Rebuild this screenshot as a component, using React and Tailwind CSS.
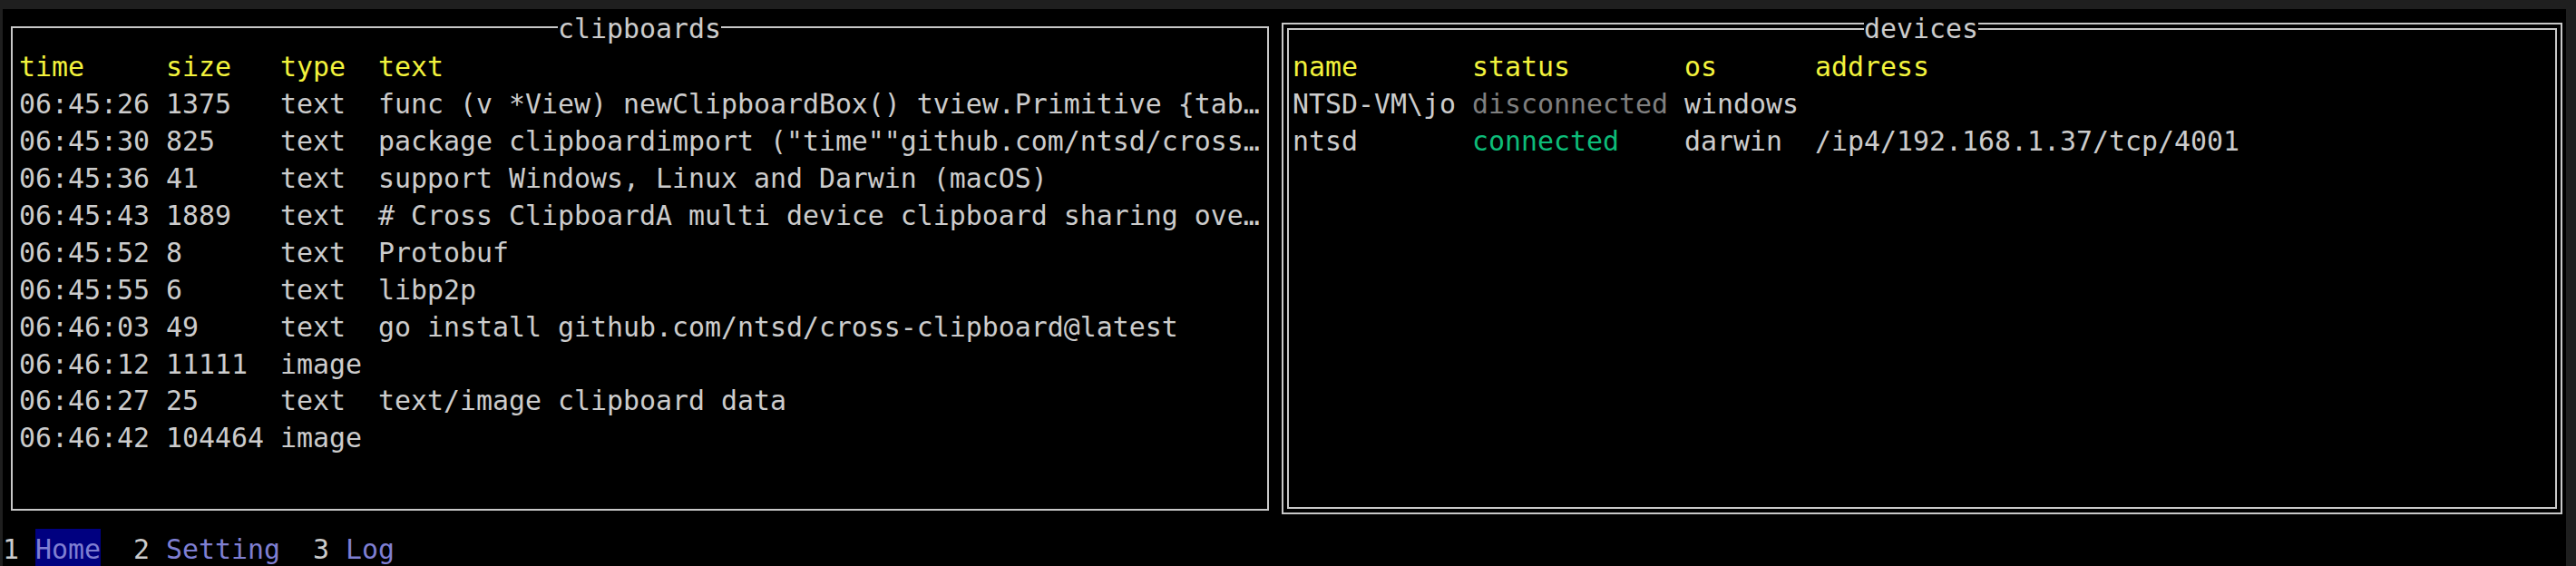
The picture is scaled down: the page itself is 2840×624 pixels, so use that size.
import React from 'react';

const clipboards = [
  ['06:45:26', '1375', 'text', 'func (v *View) newClipboardBox() tview.Primitive {tab…'],
  ['06:45:30', '825', 'text', 'package clipboardimport ("time""github.com/ntsd/cross…'],
  ['06:45:36', '41', 'text', 'support Windows, Linux and Darwin (macOS)'],
  ['06:45:43', '1889', 'text', '# Cross ClipboardA multi device clipboard sharing ove…'],
  ['06:45:52', '8', 'text', 'Protobuf'],
  ['06:45:55', '6', 'text', 'libp2p'],
  ['06:46:03', '49', 'text', 'go install github.com/ntsd/cross-clipboard@latest'],
  ['06:46:12', '11111', 'image', ''],
  ['06:46:27', '25', 'text', 'text/image clipboard data'],
  ['06:46:42', '104464', 'image', ''],
];

const devices = [
  { name: 'NTSD-VM\\jo', status: 'disconnected', os: 'windows', address: '' },
  { name: 'ntsd', status: 'connected', os: 'darwin', address: '/ip4/192.168.1.37/tcp/4001' },
];

const ClipboardBox = () => (
  <div className="w-[1404px] h-full pt-[19px] pb-[20px] pl-[9px] pr-[8px]">
    <div className="relative h-full border-2 border-[#c8c8c8] pt-[23px] pl-[7px]">
      <span className="absolute left-[601px] top-[-19px] bg-black whitespace-pre">clipboards</span>
      <div className="flex text-[#f2f23c]">
        <span className="w-[162px] shrink-0">time</span>
        <span className="w-[126px] shrink-0">size</span>
        <span className="w-[108px] shrink-0">type</span>
        <span>text</span>
      </div>
      {clipboards.map((row) => (
        <div key={row[0]} className="flex whitespace-pre">
          <span className="w-[162px] shrink-0">{row[0]}</span>
          <span className="w-[126px] shrink-0">{row[1]}</span>
          <span className="w-[108px] shrink-0">{row[2]}</span>
          <span>{row[3]}</span>
        </div>
      ))}
    </div>
  </div>
);

const DevicesBox = () => (
  <div className="flex-1 h-full pt-[15px] pb-[16px] pl-[6px] pr-[4px]">
    <div className="relative h-full border-2 border-[#c8c8c8] p-[4px]">
      <span className="absolute left-[640px] top-[-15px] bg-black whitespace-pre">devices</span>
      <div className="h-full border-2 border-[#c8c8c8] pt-[21px] pl-[4px]">
        <div className="flex text-[#f2f23c]">
          <span className="w-[198px] shrink-0">name</span>
          <span className="w-[234px] shrink-0">status</span>
          <span className="w-[144px] shrink-0">os</span>
          <span>address</span>
        </div>
        {devices.map((d) => (
          <div key={d.name} className="flex whitespace-pre">
            <span className="w-[198px] shrink-0">{d.name}</span>
            <span
              className={
                d.status === 'connected'
                  ? 'w-[234px] shrink-0 text-[#0dbc79]'
                  : 'w-[234px] shrink-0 text-[#7f7f7f]'
              }
            >
              {d.status}
            </span>
            <span className="w-[144px] shrink-0">{d.os}</span>
            <span>{d.address}</span>
          </div>
        ))}
      </div>
    </div>
  </div>
);

const TabBar = () => (
  <div className="flex-1 flex items-stretch whitespace-pre">
    <span className="pt-[3px]">1 </span>
    <span className="pt-[3px] bg-[#000080] text-[#7f7fd2]">Home</span>
    <span className="pt-[3px]">  2 </span>
    <span className="pt-[3px] text-[#7f7fd2]">Setting</span>
    <span className="pt-[3px]">  3 </span>
    <span className="pt-[3px] text-[#7f7fd2]">Log</span>
  </div>
);

export default function App() {
  return (
    <div className="w-[2840px] h-[624px] bg-[#1f1f1f] pt-[10px] pl-[3px] pr-[11px] font-['DejaVu_Sans_Mono',monospace] text-[29.9px] leading-[40.93px] text-[#cccccc]">
      <div className="bg-black h-full flex flex-col">
        <div className="flex h-[573px] shrink-0">
          <ClipboardBox />
          <DevicesBox />
        </div>
        <TabBar />
      </div>
    </div>
  );
}
